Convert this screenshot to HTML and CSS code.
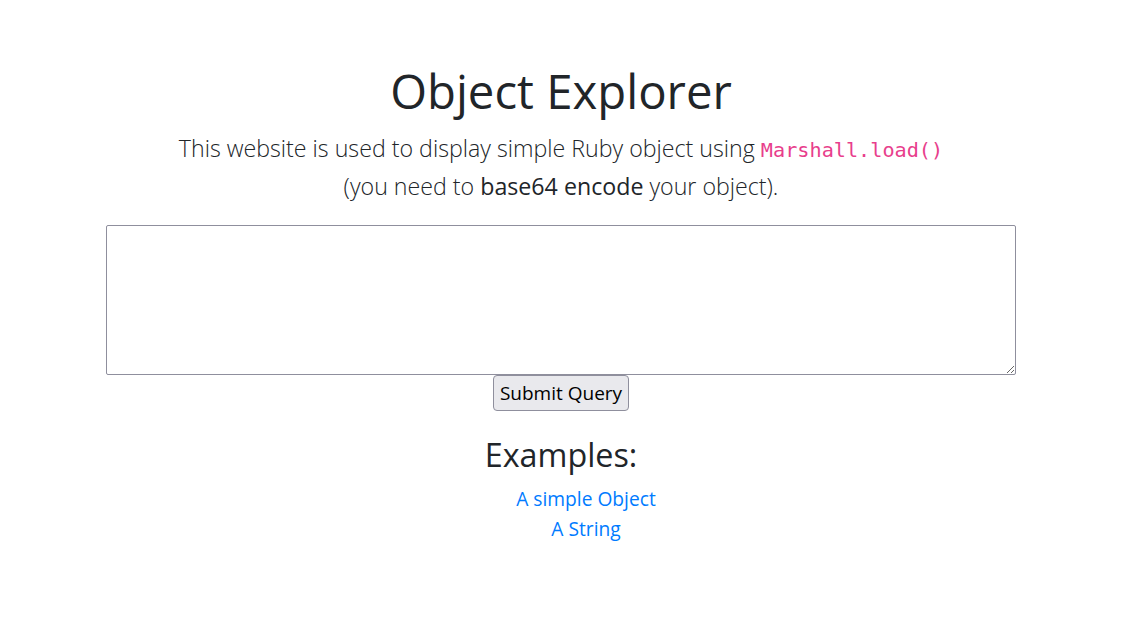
FILE: index.html
```html
<!DOCTYPE html>
<html lang="en">
<head>
<meta charset="utf-8">
<title>Object Explorer</title>
<link rel="stylesheet" href="styles.css">
</head>
<body>
<main class="page">
  <h1 class="title">Object Explorer</h1>
  <p class="lead">This website is used to display simple Ruby object using <code>Marshall.load()</code><br>(you need to <strong>base64 encode</strong> your object).</p>
  <form class="form">
    <textarea class="input" name="str"></textarea>
    <button class="submit" type="submit">Submit Query</button>
  </form>
  <h3 class="examples-title">Examples:</h3>
  <ul class="examples">
    <li><a href="#">A simple Object</a></li>
    <li><a href="#">A String</a></li>
  </ul>
</main>
</body>
</html>
```
FILE: styles.css
```css
html, body {
  margin: 0;
  padding: 0;
  background: #fff;
}
body {
  font-family: "Open Sans", "Noto Sans", sans-serif;
  font-size: 20px;
  line-height: 1.5;
  color: #212529;
}
.page {
  width: 910px;
  margin-left: 106px;
  padding-top: 63px;
  text-align: center;
}
.title {
  margin: 0;
  font-size: 47.3px;
  font-weight: 400;
  line-height: 1.2;
}
.lead {
  margin: 9px 0 20px;
  font-size: 23.2px;
  font-weight: 300;
  line-height: 38px;
}
.lead code {
  font-family: "DejaVu Sans Mono", "Liberation Mono", monospace;
  font-size: 20.2px;
  line-height: 1;
  color: #e83e8c;
}
.lead strong {
  font-weight: 500;
}
.form {
  display: flex;
  flex-direction: column;
  align-items: center;
}
.input {
  box-sizing: border-box;
  width: 910px;
  height: 150px;
  border: 1px solid #8f8f9d;
  border-radius: 2px;
  margin: 0;
  padding: 2px;
  font: inherit;
}
.submit {
  box-sizing: border-box;
  height: 36px;
  padding: 1px 6px;
  font-family: inherit;
  font-size: 19px;
  line-height: 30px;
  color: #000;
  background: #e9e9ed;
  border: 1px solid #8f8f9d;
  border-radius: 4px;
}
.examples-title {
  margin: 24px 0 10px;
  font-size: 32.3px;
  font-weight: 400;
  line-height: 1.2;
}
.examples {
  list-style: none;
  margin: 0;
  padding: 0 0 0 50px;
  font-size: 19.2px;
  line-height: 30px;
}
.examples a {
  color: #007bff;
  text-decoration: none;
}
```
